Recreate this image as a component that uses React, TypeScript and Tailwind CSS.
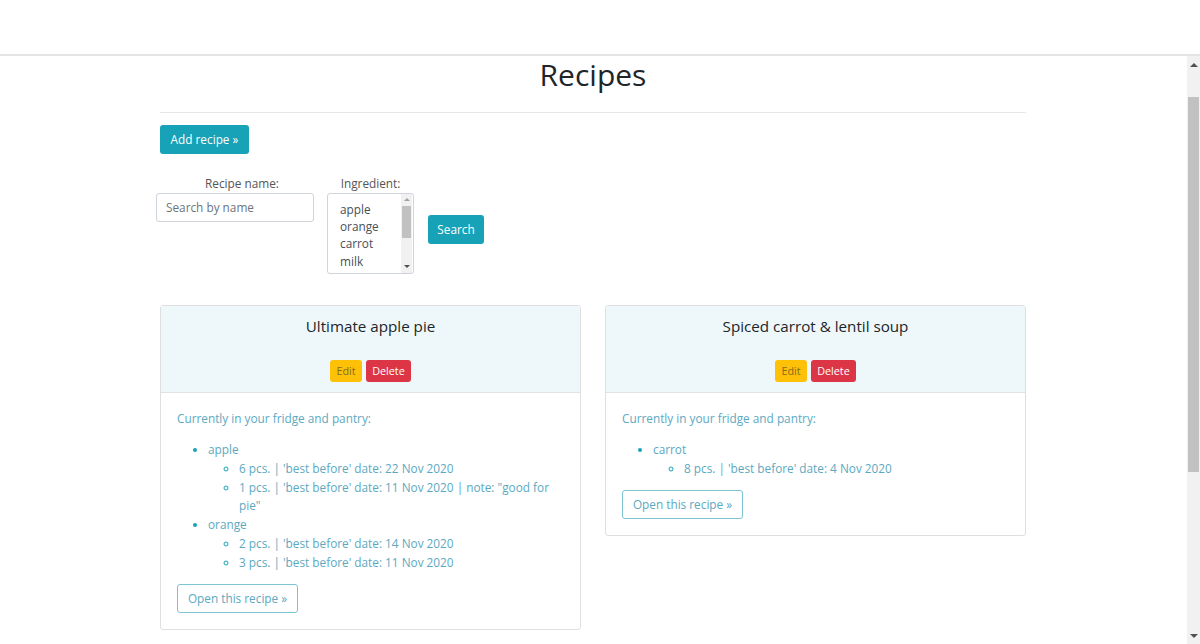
import { useState } from 'react';

type Item = { name: string; lots: string[][] };
type Recipe = { title: string; items: Item[] };

const recipes: Recipe[] = [
  {
    title: 'Ultimate apple pie',
    items: [
      {
        name: 'apple',
        lots: [
          ["6 pcs. | 'best before' date: 22 Nov 2020"],
          ["1 pcs. | 'best before' date: 11 Nov 2020 | note: \"good for", 'pie"'],
        ],
      },
      {
        name: 'orange',
        lots: [["2 pcs. | 'best before' date: 14 Nov 2020"], ["3 pcs. | 'best before' date: 11 Nov 2020"]],
      },
    ],
  },
  {
    title: 'Spiced carrot & lentil soup',
    items: [{ name: 'carrot', lots: [["8 pcs. | 'best before' date: 4 Nov 2020"]] }],
  },
];

const ingredients = ['apple', 'orange', 'carrot', 'milk'];

function Scrollbar() {
  return (
    <div className="flex w-[13px] shrink-0 flex-col bg-[#f1f1f1]">
      <div className="flex h-[17px] items-center justify-center">
        <div className="h-0 w-0 border-x-[4px] border-b-[4px] border-x-transparent border-b-[#505050]" />
      </div>
      <div className="mx-[1px] mt-[24px] h-[375px] bg-[#c1c1c1]" />
      <div className="flex-1" />
      <div className="flex h-[17px] items-center justify-center">
        <div className="h-0 w-0 border-x-[4px] border-t-[4px] border-x-transparent border-t-[#505050]" />
      </div>
    </div>
  );
}

function IngredientSelect() {
  const [picked, setPicked] = useState<string | null>(null);
  return (
    <div className="flex h-[81px] w-[87px] rounded-[3px] border border-[#ced4da] bg-white">
      <ul className="flex-1 pl-[12px] pt-[7px] text-[11.8px] leading-[17.3px] text-[#495057]">
        {ingredients.map((i) => (
          <li
            key={i}
            onClick={() => setPicked(i)}
            className={picked === i ? 'cursor-default bg-[#cde8f0]' : 'cursor-default'}
          >
            {i}
          </li>
        ))}
      </ul>
      <div className="mr-[1px] flex w-[11px] flex-col bg-[#f1f1f1]">
        <div className="flex h-[12px] items-center justify-center">
          <div className="h-0 w-0 border-x-[3px] border-b-[3px] border-x-transparent border-b-[#a3a3a3]" />
        </div>
        <div className="mx-[1px] h-[32px] bg-[#c1c1c1]" />
        <div className="flex-1" />
        <div className="flex h-[12px] items-center justify-center">
          <div className="h-0 w-0 border-x-[3px] border-t-[3px] border-x-transparent border-t-[#505050]" />
        </div>
      </div>
    </div>
  );
}

function RecipeCard({ recipe }: { recipe: Recipe }) {
  return (
    <div className="w-[421px] rounded-[3px] border border-[#dfdfdf] bg-white">
      <div className="flex flex-col items-center border-b border-[#e2e2e2] bg-[#eef8fb] pt-[11px] pb-[10px]">
        <h5 className="text-[15.2px] leading-[19px] text-[#212529]">{recipe.title}</h5>
        <div className="mt-[24px] flex gap-[4px]">
          <button className="h-[22px] w-[32px] rounded-[3px] bg-[#ffc107] text-[10.8px] text-[#866b1e]">Edit</button>
          <button className="h-[22px] w-[45px] rounded-[3px] bg-[#dc3545] text-[10.8px] text-white">Delete</button>
        </div>
      </div>
      <div className="px-[16px] pt-[16px] pb-[16px] text-[11.8px] leading-[18.75px] text-[#5ca9bf]">
        <p className="mb-[12.5px]">Currently in your fridge and pantry:</p>
        <ul className="mb-[12.5px] list-disc pl-[31px] marker:text-[#17a2b8]">
          {recipe.items.map((it) => (
            <li key={it.name}>
              {it.name}
              <ul className="list-[circle] pl-[31px] marker:text-[#7fbfcf]">
                {it.lots.map((l) => (
                  <li key={l[0]}>
                    <span className="whitespace-nowrap">{l[0]}</span>
                    {l[1] && (
                      <>
                        <br />
                        {l[1]}
                      </>
                    )}
                  </li>
                ))}
              </ul>
            </li>
          ))}
        </ul>
        <button className="h-[29px] w-[121px] rounded-[3px] border border-[#7cc3d3] text-[11.8px] text-[#5ca9bf]">
          Open this recipe »
        </button>
      </div>
    </div>
  );
}

export default function App() {
  return (
    <div className="flex h-[644px] w-[1200px] flex-col overflow-hidden bg-white font-['Open_Sans','Noto_Sans',sans-serif] text-[#212529]">
      <header className="h-[56px] shrink-0 border-b-2 border-[#e4e4e4] bg-white" />
      <div className="flex min-h-0 flex-1">
        <main className="min-w-0 flex-1">
          <div className="ml-[160px] w-[866px]">
            <h1 className="text-center text-[30px] font-normal leading-[38px]">Recipes</h1>
            <hr className="mt-[18px] mb-[12px] border-[#e6e6e6]" />
            <button className="h-[29px] w-[89px] rounded-[3px] bg-[#17a2b8] text-[11.8px] text-white">
              Add recipe »
            </button>

            <form className="mt-[20px] ml-[-4px] flex items-start">
              <div className="flex w-[158px] flex-col">
                <label className="pl-[14px] text-center text-[11.8px] leading-[18.75px] text-[#555]">
                  Recipe name:
                </label>
                <input
                  placeholder="Search by name"
                  className="h-[29px] rounded-[3px] border border-[#ced4da] px-[9px] text-[11.8px] text-[#495057] outline-none placeholder:text-[#6c757d]"
                />
              </div>
              <div className="ml-[13px] flex flex-col items-center">
                <label className="text-[11.8px] leading-[18.75px] text-[#555]">Ingredient:</label>
                <IngredientSelect />
              </div>
              <button
                type="button"
                className="mt-[41px] ml-[14px] h-[29px] w-[56px] rounded-[3px] bg-[#17a2b8] text-[11.8px] text-white"
              >
                Search
              </button>
            </form>

            <div className="mt-[31px] flex items-start gap-[24px]">
              {recipes.map((r) => (
                <RecipeCard key={r.title} recipe={r} />
              ))}
            </div>
          </div>
        </main>
        <Scrollbar />
      </div>
    </div>
  );
}
